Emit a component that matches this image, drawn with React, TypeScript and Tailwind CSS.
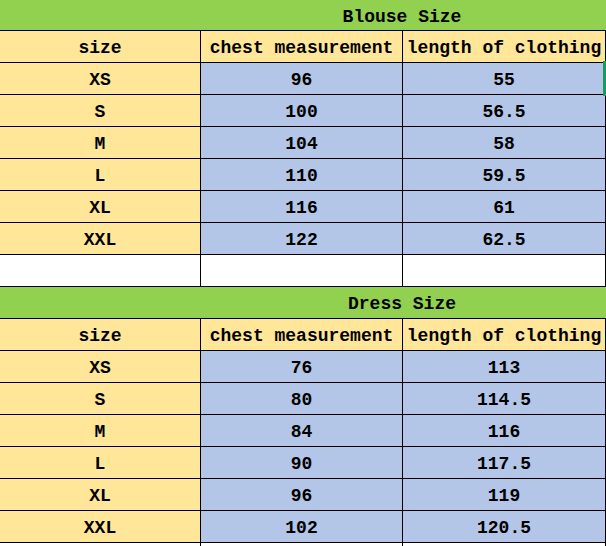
import React from "react";

const blouse = [
  ["XS", "96", "55"],
  ["S", "100", "56.5"],
  ["M", "104", "58"],
  ["L", "110", "59.5"],
  ["XL", "116", "61"],
  ["XXL", "122", "62.5"],
];

const dress = [
  ["XS", "76", "113"],
  ["S", "80", "114.5"],
  ["M", "84", "116"],
  ["L", "90", "117.5"],
  ["XL", "96", "119"],
  ["XXL", "102", "120.5"],
];

function Cell({ children, bg }: { children?: React.ReactNode; bg: string }) {
  return (
    <div
      className={`${bg} flex items-center justify-center overflow-visible whitespace-nowrap pt-[3px] leading-none`}
    >
      {children}
    </div>
  );
}

function Row({ cells, header }: { cells: string[]; header?: boolean }) {
  return (
    <div className="grid grid-cols-[200px_201px_202px] gap-px h-[31px] pr-px shrink-0">
      <Cell bg="bg-[#ffe699]">{cells[0]}</Cell>
      <Cell bg={header ? "bg-[#ffe699]" : "bg-[#b4c6e7]"}>{cells[1]}</Cell>
      <Cell bg={header ? "bg-[#ffe699]" : "bg-[#b4c6e7]"}>{cells[2]}</Cell>
    </div>
  );
}

function BlankRow({ h }: { h: string }) {
  return (
    <div className={`grid grid-cols-[200px_201px_202px] gap-px ${h} pr-px shrink-0`}>
      <div className="bg-white" />
      <div className="bg-white" />
      <div className="bg-white" />
    </div>
  );
}

function Title({ text, h }: { text: string; h: string }) {
  return (
    <div className={`${h} bg-[#92d050] overflow-hidden shrink-0 flex`}>
      <div className="w-[804px] shrink-0 flex items-center justify-center pt-[3px] leading-none whitespace-nowrap">
        {text}
      </div>
    </div>
  );
}

export default function App() {
  return (
    <div
      className="relative w-[606px] h-[546px] overflow-hidden bg-black flex flex-col gap-px text-[18px] font-bold text-black"
      style={{ fontFamily: '"Liberation Mono", "DejaVu Sans Mono", monospace' }}
    >
      <Title text="Blouse Size" h="h-[30px]" />
      <Row cells={["size", "chest measurement", "length of clothing"]} header />
      {blouse.map((r) => (
        <Row key={"b" + r[0]} cells={r} />
      ))}
      <BlankRow h="h-[31px]" />
      <Title text="Dress Size" h="h-[31px]" />
      <Row cells={["size", "chest measurement", "length of clothing"]} header />
      {dress.map((r) => (
        <Row key={"d" + r[0]} cells={r} />
      ))}
      <BlankRow h="h-[10px]" />
      <div className="absolute left-[603px] top-[61px] w-[3px] h-[35px] bg-[#179c5e]" />
    </div>
  );
}
